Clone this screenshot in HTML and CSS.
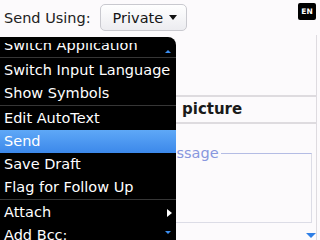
FILE: index.html
```html
<!DOCTYPE html>
<html lang="en">
<head>
  <meta charset="UTF-8" />
  <title>Compose</title>
  <link rel="stylesheet" href="styles.css">
</head>
<body>
  <div class="screen">

    <!-- header -->
    <div class="header">
      <span class="label">Send Using:</span>
      <button class="select">Private <span class="caret"></span></button>
    </div>
    <div class="lang">EN</div>

    <!-- compose form (behind the menu) -->
    <div class="form">
      <div class="subject"><span>picture</span></div>
      <fieldset class="message">
        <legend>Message</legend>
      </fieldset>
      <span class="scroll-down"></span>
    </div>

    <!-- popup menu -->
    <div class="menu">
      <span class="arrow-up"></span>
      <div class="menu-view">
        <ul class="menu-list">
          <li class="item">Switch Application</li>
          <li class="sep"></li>
          <li class="item">Switch Input Language</li>
          <li class="item">Show Symbols</li>
          <li class="sep"></li>
          <li class="item">Edit AutoText</li>
          <li class="item active">Send</li>
          <li class="item">Save Draft</li>
          <li class="item">Flag for Follow Up</li>
          <li class="sep"></li>
          <li class="item sub">Attach <span class="tri"></span></li>
          <li class="item">Add Bcc:</li>
        </ul>
      </div>
      <span class="arrow-down"></span>
    </div>

  </div>
</body>
</html>
```

FILE: styles.css
```css
body {
  margin: 0;
  font-family: 'DejaVu Sans', sans-serif;
  background: #fcfafc;
}

.screen {
  position: relative;
  width: 320px;
  height: 240px;
  overflow: hidden;
}

/* Header */
.header {
  height: 35px;
  display: flex;
  align-items: center;
  gap: 8px;
  padding-left: 4px;
}

.header .label {
  font-size: 14.5px;
  color: #222;
}

.select {
  height: 27px;
  width: 87px;
  margin-left: 1px;
  padding: 0 0 0 12px;
  display: flex;
  align-items: center;
  gap: 6px;
  font-family: 'DejaVu Sans', sans-serif;
  font-size: 14.5px;
  color: #151515;
  background: linear-gradient(#ffffff, #ececf0);
  border: 1px solid #c9c9cf;
  border-radius: 5px;
}

.caret {
  width: 0;
  height: 0;
  border-left: 4px solid transparent;
  border-right: 4px solid transparent;
  border-top: 5px solid #111;
}

.lang {
  position: absolute;
  top: 3px;
  right: 4px;
  width: 18px;
  height: 17px;
  background: #000;
  border-radius: 2px;
  color: #fff;
  font-size: 7.5px;
  font-weight: bold;
  display: flex;
  align-items: center;
  justify-content: center;
}

/* Form */
.form {
  position: relative;
  height: 205px;
  width: 317px;
  border-right: 1px solid #dedbe0;
  padding-top: 60px;
  box-sizing: border-box;
}

.subject {
  height: 25px;
  border-top: 2px solid #dedbdf;
  border-bottom: 2px solid #dedbdf;
  padding-left: 182px;
  font-size: 15px;
  font-weight: bold;
  line-height: 25px;
  color: #1a1a1a;
}

.message {
  margin: 21px 4px 0 148px;
  padding: 0 0 0 4px;
  height: 76px;
  border: 1px solid #dcdce6;
  border-top-color: #b4bce4;
}

.message legend {
  padding: 0 2px;
  font-size: 14.5px;
  line-height: 17px;
  color: #8897de;
}

.scroll-down {
  position: absolute;
  right: 0;
  bottom: 2px;
  width: 0;
  height: 0;
  border-left: 5px solid transparent;
  border-right: 5px solid transparent;
  border-top: 5px solid #2f7fe6;
}

/* Menu */
.menu {
  position: absolute;
  left: 0;
  top: 37px;
  width: 176px;
  height: 203px;
  padding-top: 6px;
  box-sizing: border-box;
  background: #000;
  border-top-right-radius: 8px;
}

.menu-view {
  height: 197px;
  overflow: hidden;
}

.menu-list {
  list-style: none;
  margin: -9px 0 0;
  padding: 0;
}

.item {
  height: 23px;
  line-height: 23px;
  padding-left: 4px;
  font-size: 14.5px;
  color: #fff;
  white-space: nowrap;
}

.item.active {
  background: linear-gradient(#5ea8f7, #3c88ea);
}

.item.sub {
  display: flex;
  align-items: center;
  justify-content: space-between;
  padding-right: 4px;
}

.tri {
  width: 0;
  height: 0;
  border-top: 4px solid transparent;
  border-bottom: 4px solid transparent;
  border-left: 5px solid #fff;
}

.sep {
  height: 2px;
  border-top: 1px solid #363636;
  box-sizing: border-box;
}

.arrow-up,
.arrow-down {
  position: absolute;
  right: 5px;
  width: 0;
  height: 0;
  border-left: 3px solid transparent;
  border-right: 3px solid transparent;
}

.arrow-up {
  top: 13px;
  border-bottom: 3px solid #3b8ef0;
}

.arrow-down {
  bottom: 6px;
  border-top: 3px solid #3b8ef0;
}
```
